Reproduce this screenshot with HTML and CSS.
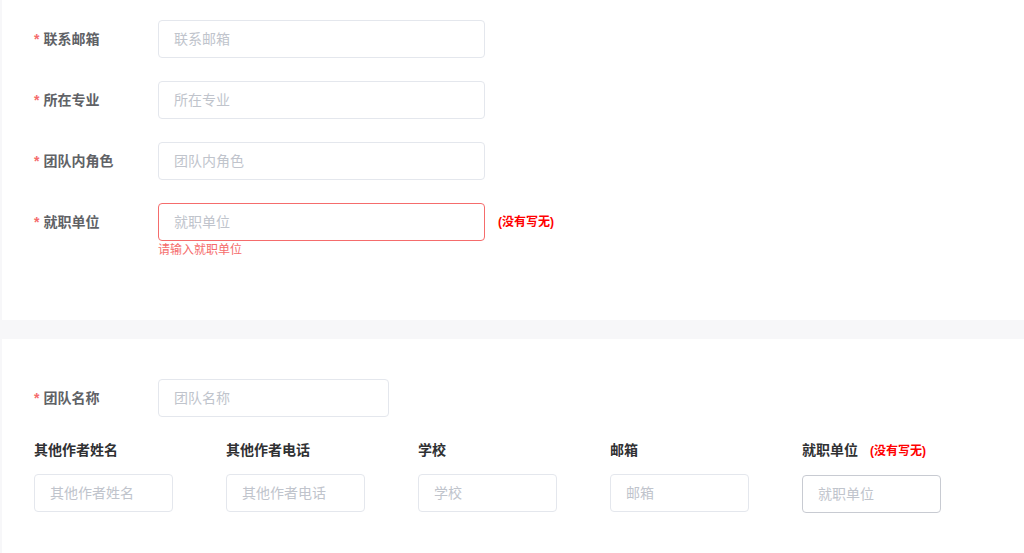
FILE: index.html
```
<!DOCTYPE html>
<html>
<head>
<meta charset="utf-8">
<title>团队信息</title>
<link rel="stylesheet" href="styles.css">
</head>
<body>

<div class="card card-top">
  <div class="form-item">
    <label class="label required">联系邮箱</label>
    <div class="control"><input class="input" placeholder="联系邮箱"></div>
  </div>
  <div class="form-item">
    <label class="label required">所在专业</label>
    <div class="control"><input class="input" placeholder="所在专业"></div>
  </div>
  <div class="form-item">
    <label class="label required">团队内角色</label>
    <div class="control"><input class="input" placeholder="团队内角色"></div>
  </div>
  <div class="form-item">
    <label class="label required">就职单位</label>
    <div class="control is-error">
      <input class="input" placeholder="就职单位">
      <div class="error">请输入就职单位</div>
    </div>
    <span class="hint">(没有写无)</span>
  </div>
</div>

<div class="card card-bottom">
  <div class="form-item">
    <label class="label required">团队名称</label>
    <div class="control control-short"><input class="input" placeholder="团队名称"></div>
  </div>

  <div class="authors">
    <div class="col">
      <div class="col-label">其他作者姓名</div>
      <input class="input" placeholder="其他作者姓名">
    </div>
    <div class="col">
      <div class="col-label">其他作者电话</div>
      <input class="input" placeholder="其他作者电话">
    </div>
    <div class="col">
      <div class="col-label">学校</div>
      <input class="input" placeholder="学校">
    </div>
    <div class="col">
      <div class="col-label">邮箱</div>
      <input class="input" placeholder="邮箱">
    </div>
    <div class="col">
      <div class="col-label">就职单位<span class="hint hint-inline">(没有写无)</span></div>
      <input class="input is-hover" placeholder="就职单位">
    </div>
  </div>
</div>

</body>
</html>
```

FILE: styles.css
```
html, body {
  margin: 0;
  padding: 0;
}

body {
  background: #f7f7f9;
  font-family: "Helvetica Neue", "Liberation Sans", "Noto Sans CJK SC", sans-serif;
  font-size: 14px;
  color: #606266;
  overflow: hidden;
}

.card {
  background: #fff;
  margin-left: 2px;
}

.card-top {
  height: 320px;
  box-sizing: border-box;
  padding-top: 20px;
}

.card-bottom {
  margin-top: 19px;
  height: 214px;
  box-sizing: border-box;
  padding-top: 40px;
}

.form-item {
  display: flex;
  align-items: flex-start;
  margin-bottom: 23px;
}

.label {
  width: 156px;
  box-sizing: border-box;
  padding-left: 32px;
  line-height: 38px;
  font-weight: bold;
  color: #606266;
}

.label.required:before {
  content: "*";
  color: #f56c6c;
  margin-right: 4px;
}

.control {
  position: relative;
  width: 327px;
}

.control-short {
  width: 231px;
}

.input {
  display: block;
  width: 100%;
  height: 38px;
  box-sizing: border-box;
  padding: 0 15px;
  border: 1px solid #e4e7ed;
  border-radius: 4px;
  background: #fff;
  font-family: inherit;
  font-size: 14px;
  color: #606266;
  outline: none;
}

.input::placeholder {
  color: #c0c4cc;
}

.input.is-hover {
  border-color: #c8cbd2;
}

.is-error .input {
  border-color: #f56c6c;
}

.error {
  position: absolute;
  top: 100%;
  left: 0;
  padding-top: 3px;
  font-size: 12px;
  line-height: 1;
  color: #f56c6c;
}

.hint {
  margin-left: 13px;
  line-height: 38px;
  font-size: 12px;
  font-weight: bold;
  color: #f00;
}

.hint-inline {
  margin-left: 12px;
  line-height: 22px;
}

.authors {
  display: flex;
  gap: 53px;
  padding-left: 32px;
  margin-top: -1px;
}

.col {
  width: 139px;
}

.col-label {
  line-height: 22px;
  margin-bottom: 13px;
  font-weight: bold;
  color: #303133;
  white-space: nowrap;
}
```
